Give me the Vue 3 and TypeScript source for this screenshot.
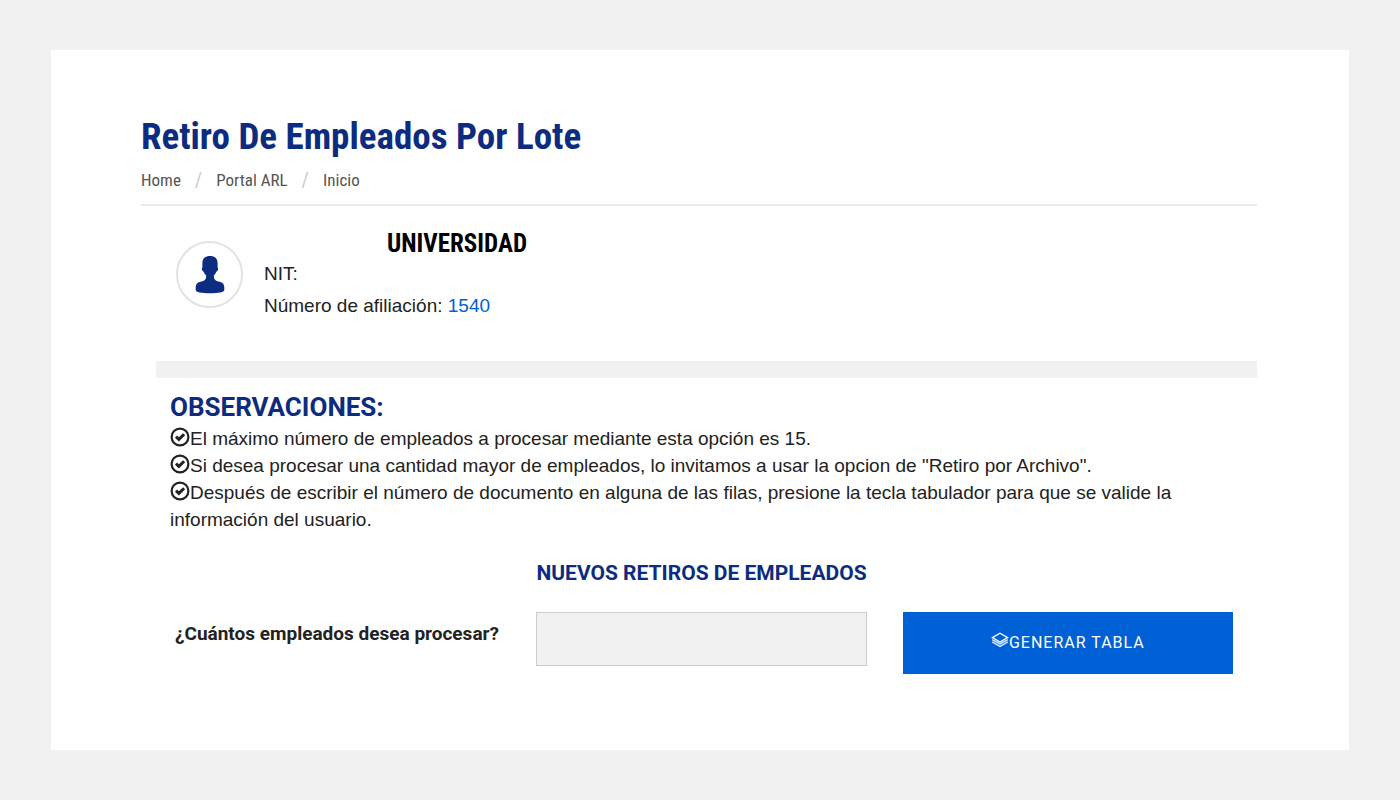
<script setup lang="ts">
import { ref } from 'vue'

const crumbs: string[] = ['Home', 'Portal ARL', 'Inicio']
const notes: string[] = [
  'El máximo número de empleados a procesar mediante esta opción es 15.',
  'Si desea procesar una cantidad mayor de empleados, lo invitamos a usar la opcion de "Retiro por Archivo".',
  'Después de escribir el número de documento en alguna de las filas, presione la tecla tabulador para que se valide la información del usuario.',
]
const employeeCount = ref('')
</script>

<template>
  <main class="page">
    <header class="header">
      <h1>Retiro De Empleados Por Lote</h1>
      <nav aria-label="Ruta">
        <ol class="crumbs">
          <li v-for="crumb in crumbs" :key="crumb"><a href="#">{{ crumb }}</a></li>
        </ol>
      </nav>
    </header>

    <section class="company">
      <div class="avatar">
        <svg viewBox="0 0 30 38" width="30" height="38" aria-hidden="true">
          <path d="M15 0C10.300 0 7.400 2.500 7.400 7v4.600c-.9.3-.7 2 .1 3.200.3.5.7.8 1.100.9.600 1.600 1.600 2.700 2.500 3.600v2.600c-.6 2.100-2.600 3-5.600 3.800C2 26.600.700 28.500.700 31.500v2.500c0 2.200 5.800 3.300 14.300 3.300s14.300-1.100 14.300-3.300v-2.500c0-3-1.300-4.900-4.800-5.800-3-.8-5-1.700-5.600-3.800v-2.600c.9-.9 1.900-2 2.500-3.600.4-.1.8-.4 1.100-.9.8-1.200 1-2.900.1-3.200V7C22.600 2.500 19.700 0 15 0z" fill="#0b2c80" />
        </svg>
      </div>
      <div class="details">
        <h2>UNIVERSIDAD</h2>
        <p>NIT:</p>
        <p>Número de afiliación: <a href="#">1540</a></p>
      </div>
    </section>

    <div class="content">
      <section class="notes">
        <h2>OBSERVACIONES:</h2>
        <p v-for="note in notes" :key="note">
          <svg class="check" viewBox="0 0 20 20" width="20" height="20" aria-hidden="true">
            <circle cx="10" cy="10" r="8.400" fill="none" stroke="#222" stroke-width="2.200" />
            <path d="M6 9.600l2.900 2.800 5.200-5.200" fill="none" stroke="#222" stroke-width="3" />
          </svg>{{ note }}
        </p>
      </section>

      <form @submit.prevent>
        <h3>NUEVOS RETIROS DE EMPLEADOS</h3>
        <div class="fields">
          <label for="employee-count">¿Cuántos empleados desea procesar?</label>
          <input id="employee-count" v-model="employeeCount" type="text" />
          <button type="submit">
            <svg viewBox="0 0 18 16" width="18" height="16" fill="none" stroke="#fff" aria-hidden="true">
              <path d="M9 1.200l7.600 4.400L9 10 1.400 5.600z" stroke-width="1.300" />
              <path d="M1.200 7.600L9 12l7.800-4.400M1.200 9.900L9 14.300l7.800-4.400" stroke-width="1.500" opacity=".85" />
            </svg>GENERAR TABLA
          </button>
        </div>
      </form>
    </div>
  </main>
</template>

<style>
body {
  background: #f1f1f1;
}
</style>

<style scoped>
.page {
  margin: 50px 51px;
  padding: 65px 92px 76px 90px;
  background: #fff;
  color: #222;
  font: 19px/27px "Liberation Sans", Arial, sans-serif;
}

h1,
h2,
h3,
p,
ol {
  margin: 0;
  padding: 0;
}

a {
  color: #0060d6;
  text-decoration: none;
}

.header {
  padding-bottom: 10px;
  border-bottom: 2px solid #ebebeb;
}

h1 {
  color: #0b2c80;
  font: bold 37px/44px "Roboto Condensed", Roboto, sans-serif;
}

.crumbs {
  display: flex;
  margin-top: 7px;
  list-style: none;
  font: 17px/28px "Roboto Condensed", Roboto, sans-serif;
}

.crumbs li {
  display: flex;
}

.crumbs a {
  color: #555;
}

.crumbs li + li::before {
  content: "/";
  padding: 0 14px;
  color: #ccc;
  font-size: 20px;
}

.company {
  display: flex;
  gap: 21px;
  padding: 22px 0 39px 35px;
}

.avatar {
  display: flex;
  box-sizing: border-box;
  width: 67px;
  height: 67px;
  margin-top: 13px;
  align-items: center;
  justify-content: center;
  border: 2px solid #e3e3e3;
  border-radius: 50%;
}

.details h2 {
  padding: 2px 0 0 123px;
  color: #000;
  font: bold 25px/28px "Roboto Condensed", Roboto, sans-serif;
}

.details p {
  line-height: 32px;
}

.content {
  margin-left: 15px;
  padding: 14px 24px 0 14px;
  border-top: 17px solid #f1f1f1;
}

.notes h2 {
  margin-bottom: 2px;
  color: #0b2c80;
  font: bold 26px/31px Roboto, sans-serif;
}

.check {
  vertical-align: -2px;
}

h3 {
  margin: 25px 0 24px;
  color: #0b2c80;
  font: bold 21px/30px Roboto, sans-serif;
  text-align: center;
}

.fields {
  display: grid;
  grid-template-columns: repeat(3, 1fr);
  gap: 36px;
  align-items: start;
}

label {
  padding: 8px 0 0 5px;
  font: bold 19px/27px Roboto, sans-serif;
}

input {
  box-sizing: border-box;
  width: 100%;
  height: 54px;
  padding: 0 16px;
  border: 1px solid #ccc;
  background: #f1f1f1;
  font: inherit;
}

button {
  height: 62px;
  padding: 0;
  border: 0;
  background: #0060d6;
  color: #fff;
  font: 16px/24px Roboto, sans-serif;
  letter-spacing: 1px;
}
</style>
